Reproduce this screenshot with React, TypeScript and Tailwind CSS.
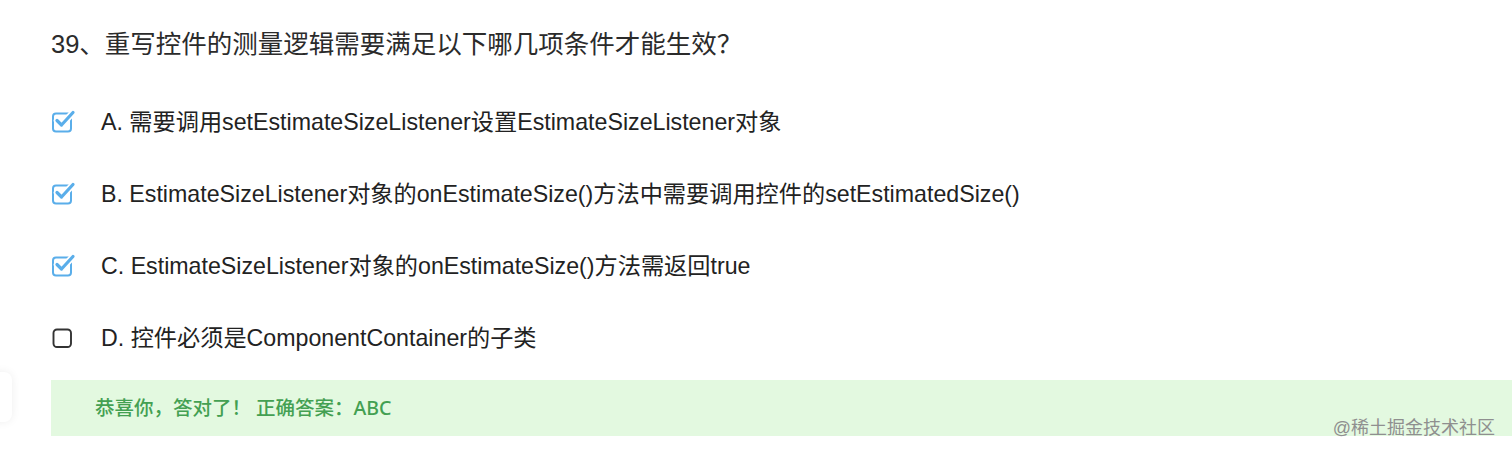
const font = { fontFamily: '"Liberation Sans", "Noto Sans CJK SC", sans-serif' };

type Option = { key: string; text: string; checked: boolean };

const options: Option[] = [
  { key: 'A', text: '需要调用setEstimateSizeListener设置EstimateSizeListener对象', checked: true },
  { key: 'B', text: 'EstimateSizeListener对象的onEstimateSize()方法中需要调用控件的setEstimatedSize()', checked: true },
  { key: 'C', text: 'EstimateSizeListener对象的onEstimateSize()方法需返回true', checked: true },
  { key: 'D', text: '控件必须是ComponentContainer的子类', checked: false },
];

function CheckBox({ checked }: { checked: boolean }) {
  if (!checked) {
    return (
      <svg width="26" height="26" viewBox="0 0 26 26" className="shrink-0">
        <rect x="3.5" y="4.5" width="17.5" height="17.5" rx="3.5" fill="none" stroke="#333" strokeWidth="1.9" />
      </svg>
    );
  }
  return (
    <svg width="26" height="26" viewBox="0 0 26 26" className="shrink-0">
      <rect x="3" y="4.5" width="18" height="18" rx="3" fill="none" stroke="#5aaeea" strokeWidth="2" />
      <path d="M7 11.5 L11.5 16 L23 3.5" fill="none" stroke="#fff" strokeWidth="6.5" strokeLinecap="round" strokeLinejoin="round" />
      <path d="M7 11.5 L11.5 16 L23 3.5" fill="none" stroke="#5aaeea" strokeWidth="3.2" strokeLinecap="round" strokeLinejoin="round" />
    </svg>
  );
}

export default function App() {
  return (
    <div className="relative h-[452px] w-full overflow-hidden bg-white" style={font}>
      <div className="pl-[51px] pt-[26px]">
        <h1 className="h-9 text-[25.5px] leading-9 text-[#2b2b2b]">39、重写控件的测量逻辑需要满足以下哪几项条件才能生效？</h1>
      </div>

      <div className="mt-6 pl-[50px]">
        {options.map((o) => (
          <div key={o.key} className="flex h-[72px] items-center">
            <CheckBox checked={o.checked} />
            <span className="ml-[25px] text-[23.2px] text-[#222]">
              {o.key}. {o.text}
            </span>
          </div>
        ))}
      </div>

      <div className="ml-[51px] mt-[6px] flex h-[56px] items-center bg-[#e3f9e0] pl-[44px]">
        <span className="font-['Noto_Sans','Noto_Sans_CJK_SC',sans-serif] text-[19.5px] font-medium text-[#43a052]">
          恭喜你，答对了！ 正确答案：ABC
        </span>
      </div>

      <div className="absolute left-[-40px] top-[372px] h-[50px] w-[52px] rounded-lg bg-white shadow-[0_0_10px_rgba(0,0,0,0.07)]" />

      <div className="absolute right-[17px] top-[415px] text-[18px] text-[#8f8f8f]">@稀土掘金技术社区</div>
    </div>
  );
}
